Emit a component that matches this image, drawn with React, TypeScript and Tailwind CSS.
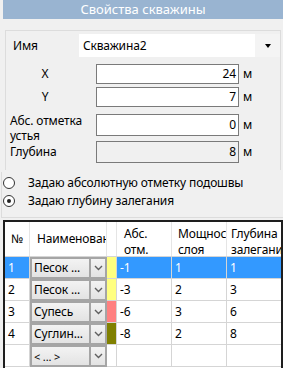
import React from "react";

interface Layer {
  n: string;
  name: string;
  color: string;
  abs: string;
  thick: string;
  depth: string;
  selected?: boolean;
}

const layers: Layer[] = [
  { n: "1", name: "Песок ...", color: "bg-[#ffff80]", abs: "-1", thick: "1", depth: "1", selected: true },
  { n: "2", name: "Песок ...", color: "bg-[#ffff80]", abs: "-3", thick: "2", depth: "3" },
  { n: "3", name: "Супесь", color: "bg-[#ff8080]", abs: "-6", thick: "3", depth: "6" },
  { n: "4", name: "Суглин...", color: "bg-[#808000]", abs: "-8", thick: "2", depth: "8" },
  { n: "", name: "< ... >", color: "bg-white", abs: "", thick: "", depth: "" },
];

const Chevron = () => (
  <svg width="9" height="6" viewBox="0 0 9 6" className="text-[#606060]">
    <path d="M1 1 L4.5 4.5 L8 1" fill="none" stroke="currentColor" strokeWidth="1.4" />
  </svg>
);

const Field = ({ value, disabled }: { value: string; disabled?: boolean }) => (
  <div className="flex items-center h-full">
    <div
      className={`w-[143px] h-full border border-[#7a7a7a] flex items-center justify-end pr-[2px] ${
        disabled ? "bg-[#f0f0f0]" : "bg-white"
      }`}
    >
      {value}
    </div>
    <span className="ml-[4px]">м</span>
  </div>
);

const Radio = ({ checked, label }: { checked?: boolean; label: string }) => (
  <div className="flex items-center h-[18px]">
    <div className="w-[12px] h-[12px] rounded-full border border-[#333] bg-white flex items-center justify-center ml-[1px]">
      {checked && <div className="w-[4px] h-[4px] rounded-full bg-[#222]" />}
    </div>
    <span className="ml-[13px]">{label}</span>
  </div>
);

export default function App() {
  return (
    <div className="w-[283px] h-[368px] overflow-hidden bg-[#f0f0f0] text-[12px] tracking-[-0.15px] text-black font-['Noto_Sans',sans-serif] leading-none">
      {/* title */}
      <div className="ml-[3px] h-[19px] bg-[#99b4d1] text-white text-[13px] tracking-normal flex items-center justify-center">
        Свойства скважины
      </div>

      {/* group box */}
      <div className="mt-[11px] ml-[5px] mr-[2px] h-[140px] border-t border-l border-r border-[#dcdcdc] relative">
        <div className="absolute left-[7px] top-[3px] h-[23px] flex items-center">Имя</div>
        <div className="absolute left-[73px] top-[3px] w-[201px] h-[23px] bg-white flex items-center">
          <span className="ml-[4px]">Скважина2</span>
          <div className="ml-auto w-[25px] h-full bg-[#f4f4f4] flex items-center justify-center">
            <div className="w-0 h-0 border-l-[3.5px] border-r-[3.5px] border-t-[4px] border-l-transparent border-r-transparent border-t-black" />
          </div>
        </div>

        <div className="absolute left-[4px] top-[33px] h-[20px] w-[70px] flex items-center justify-center">X</div>
        <div className="absolute left-[90px] top-[33px] h-[20px]">
          <Field value="24" />
        </div>

        <div className="absolute left-[4px] top-[56px] h-[20px] w-[70px] flex items-center justify-center">Y</div>
        <div className="absolute left-[90px] top-[56px] h-[20px]">
          <Field value="7" />
        </div>

        <div className="absolute left-[4px] top-[82px] w-[80px] leading-[15px]">
          Абс. отметка
          <br />
          устья
        </div>
        <div className="absolute left-[90px] top-[83px] h-[22px]">
          <Field value="0" />
        </div>

        <div className="absolute left-[4px] top-[110px] h-[22px] flex items-center">Глубина</div>
        <div className="absolute left-[90px] top-[110px] h-[22px]">
          <Field value="8" disabled />
        </div>
      </div>

      {/* radios */}
      <div className="mt-[2px] flex flex-col ml-[1px] h-[46px] pt-[2px] border-l border-b border-[#dcdcdc]">
        <Radio label="Задаю абсолютную отметку подошвы" />
        <Radio checked label="Задаю глубину залегания" />
      </div>

      {/* table */}
      <div className="mt-[2px] ml-[3px] w-[280px] h-[160px] border-2 border-[#1e1e1e] bg-white">
        <div className="grid grid-cols-[25px_77px_10px_55px_55px_54px] h-[35px] border-b border-[#d5d5d5] overflow-hidden">
          <div className="border-r border-[#e5e5e5] flex items-center justify-center">№</div>
          <div className="border-r border-[#e5e5e5] flex items-center pl-[7px] overflow-hidden whitespace-nowrap">
            Наименование
          </div>
          <div className="border-r border-[#e5e5e5]" />
          <div className="border-r border-[#e5e5e5] pl-[7px] pt-[4px] leading-[16px] overflow-hidden whitespace-nowrap">
            Абс.
            <br />
            отм.
          </div>
          <div className="border-r border-[#e5e5e5] pl-[6px] pt-[4px] leading-[16px] overflow-hidden whitespace-nowrap">
            Мощность
            <br />
            слоя
          </div>
          <div className="pl-[4px] pt-[4px] leading-[16px] overflow-hidden whitespace-nowrap">
            Глубина
            <br />
            залегания
          </div>
        </div>

        {layers.map((l, i) => {
          const cell = l.selected ? "bg-[#3399ff] text-white border-[#d5d5d5]" : "bg-white border-[#d5d5d5]";
          return (
            <div key={i} className="grid grid-cols-[25px_77px_10px_55px_55px_54px] h-[22px]">
              <div className={`border-r border-b pl-[3px] flex items-center ${cell}`}>{l.n}</div>
              <div className="border-2 border-[#a5a5a5] bg-gradient-to-b from-[#f3f3f3] to-[#e3e3e3] flex items-stretch">
                <div className={`flex-1 flex items-center pl-[2px] whitespace-nowrap overflow-hidden ${l.n === "" ? "text-[11px]" : ""}`}>
                  {l.name}
                </div>
                <div className="w-[16px] border-l-2 border-[#a5a5a5] flex items-center justify-center">
                  <Chevron />
                </div>
              </div>
              <div className={`border-r border-b border-[#d5d5d5] ${l.color}`} />
              <div className={`border-r border-b pl-[3px] flex items-center ${cell}`}>{l.abs}</div>
              <div className={`border-r border-b pl-[3px] flex items-center ${cell}`}>{l.thick}</div>
              <div className={`border-b pl-[3px] flex items-center ${cell}`}>{l.depth}</div>
            </div>
          );
        })}
      </div>
    </div>
  );
}
